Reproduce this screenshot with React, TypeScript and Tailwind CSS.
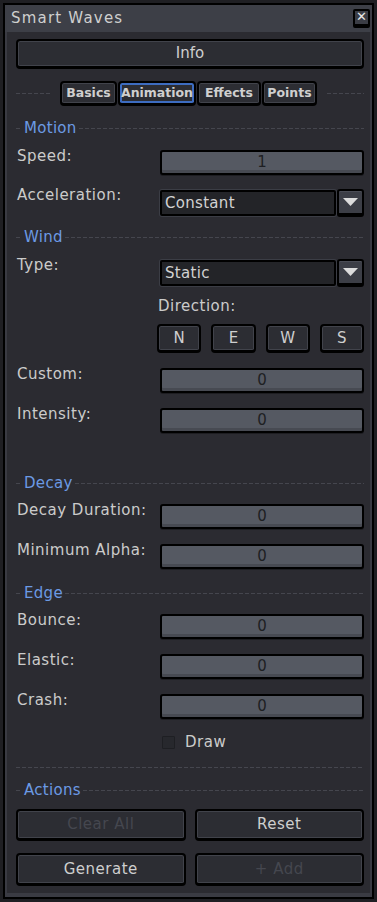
import React from "react";

const DASH =
  "h-px bg-[linear-gradient(to_right,#45464e_4px,transparent_4px)] bg-[length:6px_1px]";

function Heading({ title }: { title: string }) {
  return (
    <div className="flex h-4 items-center">
      <div className={`w-[6px] ${DASH}`} />
      <span className="px-[2px] text-[15px] leading-4 tracking-[0.3px] text-[#6b9ae4]">{title}</span>
      <div className={`flex-1 ${DASH}`} />
    </div>
  );
}

function Bevel({
  children,
  className = "",
  selected = false,
  disabled = false
}: {
  children: React.ReactNode;
  className?: string;
  selected?: boolean;
  disabled?: boolean;
}) {
  return (
    <div
      className={`flex items-center justify-center rounded-[4px] border-2 border-b-[3px] border-black bg-[#2c2d33] ${
        selected
          ? "shadow-[inset_0_0_0_2px_#3d6cc0]"
          : "shadow-[inset_0_0_0_1px_#41434b]"
      } ${disabled ? "text-[#45474f]" : "text-[#cfcfcf]"} ${className}`}
    >
      {children}
    </div>
  );
}

function NumField({ value }: { value: string }) {
  return (
    <div className="flex h-[25px] w-[204px] items-center justify-center rounded-[3px] border-2 border-black bg-[#555962] text-[15px] text-[#1e1f23] shadow-[inset_0_-3px_0_#474a52,0_1px_0_#1d1d21]">
      {value}
    </div>
  );
}

function Select({ value }: { value: string }) {
  return (
    <div className="flex h-[28px] w-[204px] items-start">
      <div className="mt-px flex h-[26px] flex-1 items-center rounded-[2px] border-2 border-black bg-[#232428] pl-[3px] text-[15px] tracking-[0.3px] text-[#d2d2d2] shadow-[0_0_0_1px_#3b3d45]">
        {value}
      </div>
      <div className="ml-px flex h-[28px] w-[27px] items-center justify-center rounded-[3px] border-2 border-b-[4px] border-black bg-[#3c3e46] shadow-[inset_0_1px_0_#4a4c55]">
        <svg width="15" height="8" viewBox="0 0 15 8">
          <polygon points="0,0 15,0 7.5,8" fill="#dcdcdc" />
        </svg>
      </div>
    </div>
  );
}

function Row({
  label,
  children,
  className = ""
}: {
  label: string;
  children: React.ReactNode;
  className?: string;
}) {
  return (
    <div className={`flex items-start ${className}`}>
      <div className="-mt-[3px] flex-1 pl-px text-[15px] leading-[18px] tracking-[0.5px] text-[#cbcbcb]">
        {label}
      </div>
      {children}
    </div>
  );
}

export default function App() {
  return (
    <div className="h-[902px] w-[377px] bg-[#1f1f23] px-[3px] pt-[3px] font-['DejaVu_Sans',sans-serif]">
      <div className="flex h-[896px] flex-col border-2 border-black bg-[#2b2b31]">
        <div className="flex h-[27px] shrink-0 items-center justify-between bg-[#3d3f47] pl-[6px] pr-[2px]">
          <span className="text-[15px] tracking-[1.2px] text-[#cfcfcf]">Smart Waves</span>
          <div className="flex h-[19px] w-[17px] items-start justify-center rounded-[2px] border-2 border-b-[4px] border-black bg-[#3a3c44] text-[13px] leading-[12px] text-[#e6e6e6]">
            ✕
          </div>
        </div>
        <div className="flex flex-1 flex-col border-x-2 border-b-4 border-[#3a3b43] pl-[9px] pr-[6px]">
          <Bevel className="mt-[7px] h-[30px] text-[15px]">Info</Bevel>

          <div className="mt-[12px] flex h-[25px] items-center">
            <div className={`w-[35px] ${DASH}`} />
            <div className="ml-[9px] flex gap-[1px] text-[12.5px] font-bold">
              <Bevel className="h-[25px] w-[57px]">Basics</Bevel>
              <Bevel className="h-[25px] w-[78px]" selected>
                Animation
              </Bevel>
              <Bevel className="h-[25px] w-[64px]">Effects</Bevel>
              <Bevel className="h-[25px] w-[55px]">Points</Bevel>
            </div>
            <div className={`ml-[10px] flex-1 ${DASH}`} />
          </div>

          <div className="mt-[14px]">
            <Heading title="Motion" />
          </div>
          <Row label="Speed:" className="mt-[14px]">
            <NumField value="1" />
          </Row>
          <Row label="Acceleration:" className="mt-[14px]">
            <Select value="Constant" />
          </Row>

          <div className="mt-[12px]">
            <Heading title="Wind" />
          </div>
          <Row label="Type:" className="mt-[14px]">
            <Select value="Static" />
          </Row>
          <div className="mt-[10px] flex h-[18px] items-center pl-[142px] text-[15px] tracking-[0.5px] text-[#cbcbcb]">
            Direction:
          </div>
          <div className="mt-[9px] flex justify-end">
            <div className="grid w-[207px] grid-cols-4 gap-[10px] text-[15px]">
              {["N", "E", "W", "S"].map((d) => (
                <Bevel key={d} className="h-[29px]">
                  {d}
                </Bevel>
              ))}
            </div>
          </div>
          <Row label="Custom:" className="mt-[15px]">
            <NumField value="0" />
          </Row>
          <Row label="Intensity:" className="mt-[15px]">
            <NumField value="0" />
          </Row>

          <div className="mt-[42px]">
            <Heading title="Decay" />
          </div>
          <Row label="Decay Duration:" className="mt-[13px]">
            <NumField value="0" />
          </Row>
          <Row label="Minimum Alpha:" className="mt-[15px]">
            <NumField value="0" />
          </Row>

          <div className="mt-[16px]">
            <Heading title="Edge" />
          </div>
          <Row label="Bounce:" className="mt-[13px]">
            <NumField value="0" />
          </Row>
          <Row label="Elastic:" className="mt-[15px]">
            <NumField value="0" />
          </Row>
          <Row label="Crash:" className="mt-[15px]">
            <NumField value="0" />
          </Row>

          <div className="mt-[16px] flex h-[14px] items-center pl-[146px]">
            <div className="h-[13px] w-[13px] rounded-[1px] border border-[#1e1f23] bg-[#27282d]" />
            <span className="ml-[10px] text-[15px] tracking-[0.5px] text-[#cbcbcb]">Draw</span>
          </div>

          <div className={`mt-[18px] ${DASH}`} />
          <div className="mt-[14px]">
            <Heading title="Actions" />
          </div>
          <div className="mt-[11px] grid grid-cols-2 gap-x-[9px] gap-y-[12px] text-[15px] tracking-[0.5px]">
            <Bevel className="h-[32px]" disabled>
              Clear All
            </Bevel>
            <Bevel className="h-[32px]">Reset</Bevel>
            <Bevel className="h-[33px]">Generate</Bevel>
            <Bevel className="h-[33px]" disabled>
              + Add
            </Bevel>
          </div>
        </div>
      </div>
    </div>
  );
}
